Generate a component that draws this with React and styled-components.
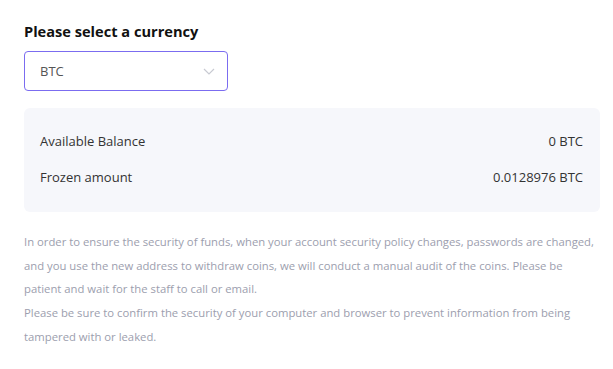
import React from "react";
import styled, { createGlobalStyle } from "styled-components";

const Global = createGlobalStyle`
  html, body { margin: 0; padding: 0; background: #fff; }
  body { font-family: "Segoe UI", "Open Sans", "Noto Sans", sans-serif; }
`;

const Page = styled.div`
  padding: 20px 13px 0 24px;
  width: 576px;
  box-sizing: content-box;
`;

const Title = styled.h2`
  margin: 0;
  font-size: 14.6px;
  font-weight: 700;
  color: #111;
  line-height: 22px;
`;

const Select = styled.div`
  margin-top: 9px;
  width: 204px;
  height: 40px;
  box-sizing: border-box;
  border: 1px solid #7b6cf0;
  border-radius: 4px;
  display: flex;
  align-items: center;
  justify-content: space-between;
  padding: 0 12px 0 15px;
  font-size: 13px;
  color: #555;
`;

const Chevron = () => (
  <svg width="12" height="7" viewBox="0 0 12 7" fill="none">
    <path d="M1 1 L6 6 L11 1" stroke="#c8cad2" strokeWidth="1.2" />
  </svg>
);

const Panel = styled.div`
  margin-top: 17px;
  background: #f6f7fb;
  border-radius: 6px;
  padding: 21px 17px 23px 16px;
  display: flex;
  flex-direction: column;
  gap: 12px;
`;

const Row = styled.div`
  display: flex;
  justify-content: space-between;
  align-items: center;
  font-size: 13px;
  line-height: 24px;
  color: #333;
`;

const Note = styled.p`
  margin: 18px 0 0;
  font-size: 11.3px;
  line-height: 23.7px;
  color: #9c9eae;
`;

export default function App() {
  return (
    <>
      <Global />
      <Page>
        <Title>Please select a currency</Title>
        <Select>
          <span>BTC</span>
          <Chevron />
        </Select>
        <Panel>
          <Row>
            <span>Available Balance</span>
            <span>0 BTC</span>
          </Row>
          <Row>
            <span>Frozen amount</span>
            <span>0.0128976 BTC</span>
          </Row>
        </Panel>
        <Note>
          In order to ensure the security of funds, when your account security policy changes, passwords are changed, and you use the new address to withdraw coins, we will conduct a manual audit of the coins. Please be patient and wait for the staff to call or email.
          <br />
          Please be sure to confirm the security of your computer and browser to prevent information from being tampered with or leaked.
        </Note>
      </Page>
    </>
  );
}
